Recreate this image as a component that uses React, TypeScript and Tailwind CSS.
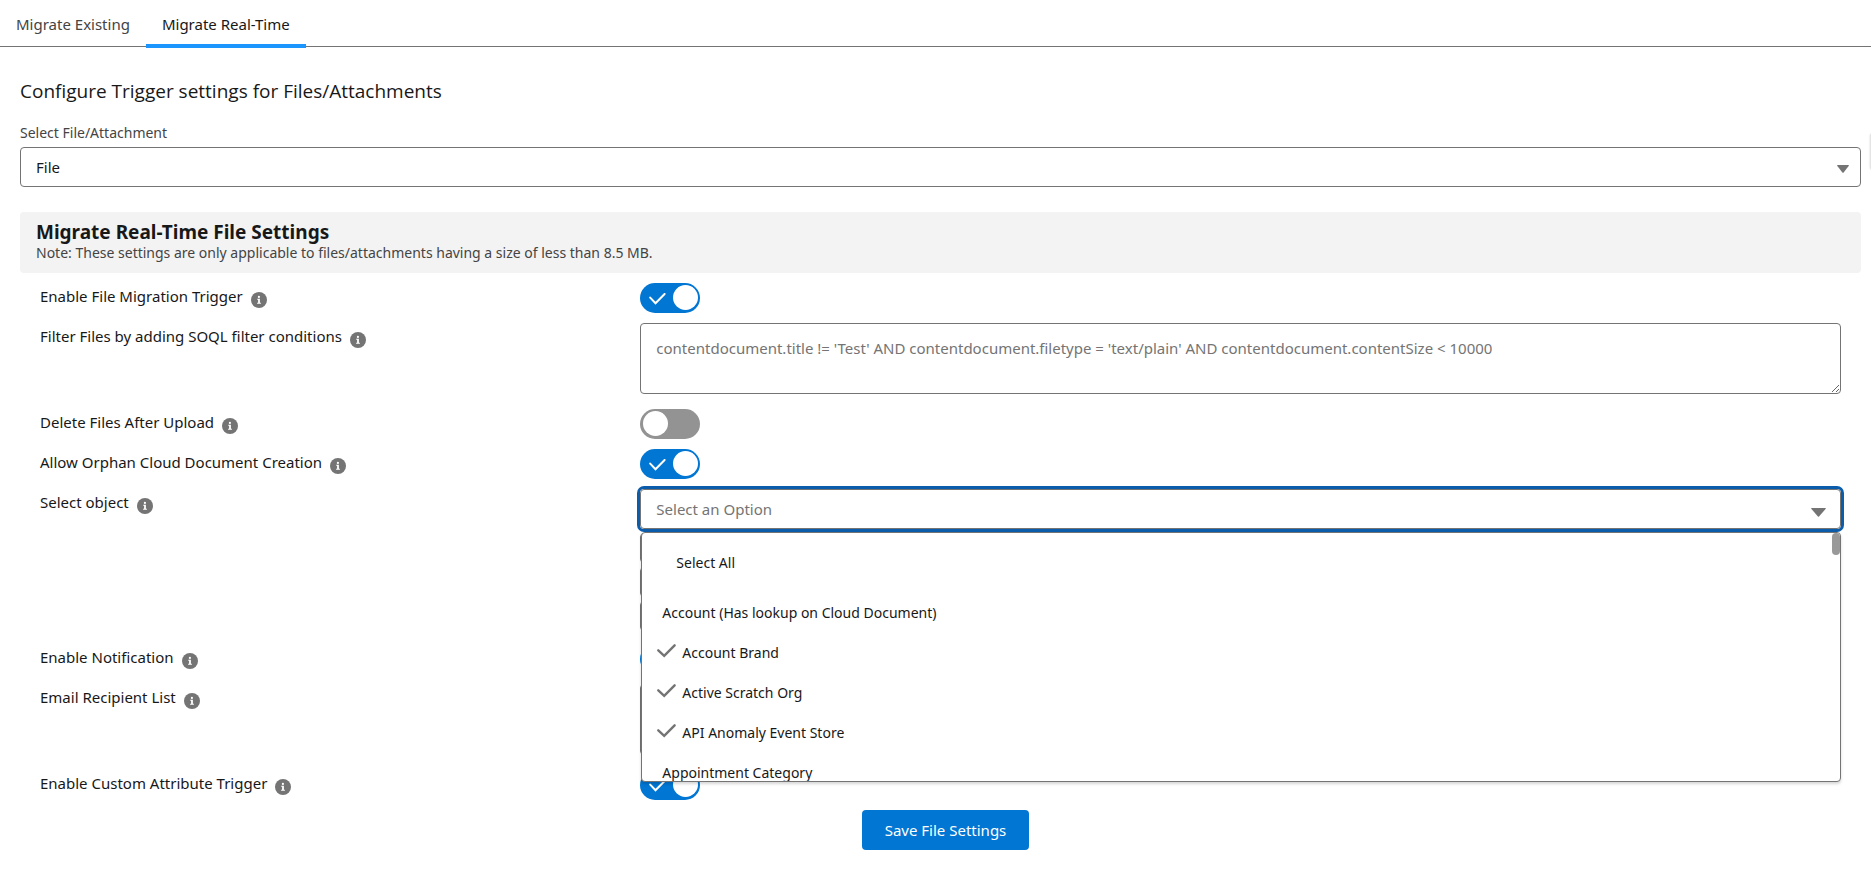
import React, { useState } from 'react';

const OBJECTS = [
    'Account (Has lookup on Cloud Document)',
    'Account Brand',
    'Active Scratch Org',
    'API Anomaly Event Store',
    'Appointment Category',
];

const InfoIcon: React.FC = () => (
    <svg className="w-4 h-4 mt-[6px] shrink-0" viewBox="0 0 16 16" aria-hidden="true">
        <circle cx="8" cy="8" r="8" fill="#747474" />
        <circle cx="7.9" cy="4.9" r="1.1" fill="#fff" />
        <path d="M6.2 6.8h2.7v4h1v1H6.1v-1h1V7.8h-.9z" fill="#fff" />
    </svg>
);

const Caret: React.FC<{ className: string }> = ({ className }) => (
    <svg className={className} viewBox="0 0 14 9" preserveAspectRatio="none" aria-hidden="true">
        <path d="M.6 0h12.8q.8.2.2 1L7.5 8.6q-.5.5-1 0L.4 1Q-.2.2.6 0z" fill="#747474" />
    </svg>
);

interface RowProps {
    label: string;
    htmlFor: string;
    className?: string;
    children: React.ReactNode;
}

const Row: React.FC<RowProps> = ({ label, htmlFor, className = 'pb-[10px]', children }) => (
    <div className={`flex items-start ${className}`}>
        <div className="w-1/3 shrink-0 flex items-start gap-2 pt-[3px]">
            <label htmlFor={htmlFor} className="leading-5">{label}</label>
            <InfoIcon />
        </div>
        <div className="flex-1 min-w-0">{children}</div>
    </div>
);

interface ToggleProps {
    id: string;
    defaultChecked?: boolean;
}

const Toggle: React.FC<ToggleProps> = ({ id, defaultChecked }) => (
    <div className="relative w-[60px] h-[30px]">
        <input
            id={id}
            type="checkbox"
            role="switch"
            defaultChecked={defaultChecked}
            className="peer appearance-none block w-full h-full rounded-full bg-[#939393] checked:bg-[#0176d3] cursor-pointer"
        />
        <span className="absolute top-[2px] left-[3px] w-[25px] h-[25px] rounded-full bg-white pointer-events-none peer-checked:left-[33px]" />
        <svg className="hidden peer-checked:block absolute top-[10px] left-[9px] w-[17px] h-3 pointer-events-none" viewBox="0 0 17 12" fill="none">
            <path d="M1.2 4.6l5.3 5.6L15.6 1" stroke="#fff" strokeWidth="2" strokeLinecap="round" />
        </svg>
    </div>
);

const App: React.FC = () => {
    const [tab, setTab] = useState('real-time');
    const [selected, setSelected] = useState<string[]>(OBJECTS.slice(1, 4));

    const toggleObject = (name: string) => {
        setSelected((prev) => (prev.includes(name) ? prev.filter((n) => n !== name) : [...prev, name]));
    };

    const tabClass = (name: string) =>
        tab === name
            ? 'relative h-full px-4 pt-[2px] text-[#181818] after:absolute after:inset-x-0 after:-bottom-[2px] after:h-1 after:bg-[#1b96ff]'
            : 'relative h-full px-4 pt-[2px] text-[#444444]';

    return (
        <div className="relative min-h-screen overflow-hidden bg-white text-[#181818] text-[15px] font-['Noto_Sans','Open_Sans',sans-serif]">
            <div role="tablist" className="flex h-[47px] border-b border-[#747474]">
                <button role="tab" aria-selected={tab === 'existing'} onClick={() => setTab('existing')} className={tabClass('existing')}>
                    Migrate Existing
                </button>
                <button role="tab" aria-selected={tab === 'real-time'} onClick={() => setTab('real-time')} className={tabClass('real-time')}>
                    Migrate Real-Time
                </button>
            </div>

            <div className="pl-5 pr-[10px] pt-8">
                <h1 className="text-[19px] leading-6 font-['Open_Sans','Noto_Sans',sans-serif]">Configure Trigger settings for Files/Attachments</h1>

                <label htmlFor="file-type" className="block mt-[18px] mb-[2px] text-sm leading-6 text-[#444444]">Select File/Attachment</label>
                <div className="relative">
                    <select id="file-type" className="appearance-none block w-full h-10 px-[15px] border border-[#747474] rounded bg-white outline-none">
                        <option>File</option>
                    </select>
                    <Caret className="absolute right-3 top-[18px] w-3 h-2 pointer-events-none" />
                </div>

                <div className="mt-[25px] h-[61px] px-4 pt-2 rounded bg-[#f3f3f3]">
                    <h2 className="text-[19px] leading-6 font-bold">Migrate Real-Time File Settings</h2>
                    <p className="text-sm leading-[18px] text-[#444444]">
                        Note: These settings are only applicable to files/attachments having a size of less than 8.5 MB.
                    </p>
                </div>

                <form className="px-5 pt-[10px]" onSubmit={(e) => e.preventDefault()}>
                    <Row label="Enable File Migration Trigger" htmlFor="migration">
                        <Toggle id="migration" defaultChecked />
                    </Row>
                    <Row label="Filter Files by adding SOQL filter conditions" htmlFor="soql" className="pb-[15px]">
                        <textarea
                            id="soql"
                            placeholder="contentdocument.title != 'Test' AND contentdocument.filetype = 'text/plain' AND contentdocument.contentSize < 10000"
                            className="block w-full h-[71px] px-[15px] py-3 leading-6 border border-[#747474] rounded placeholder:text-[#747474] outline-none"
                        />
                    </Row>
                    <Row label="Delete Files After Upload" htmlFor="delete">
                        <Toggle id="delete" />
                    </Row>
                    <Row label="Allow Orphan Cloud Document Creation" htmlFor="orphan">
                        <Toggle id="orphan" defaultChecked />
                    </Row>
                    <Row label="Select object" htmlFor="objects" className="pb-[13px]">
                        <div className="relative">
                            <input
                                id="objects"
                                role="combobox"
                                aria-expanded="true"
                                aria-controls="object-list"
                                placeholder="Select an Option"
                                className="block w-full h-10 px-[15px] border border-[#747474] rounded ring-3 ring-[#0b5cab] placeholder:text-[#747474] outline-none"
                            />
                            <Caret className="absolute right-[15px] top-[19px] w-[15px] h-[9px] pointer-events-none" />
                            <div className="absolute z-10 top-[43px] left-px right-0 h-[250px] overflow-hidden border border-[#747474] rounded bg-white shadow-[0_2px_3px_rgba(0,0,0,0.16)] text-sm">
                                <ul id="object-list" role="listbox" aria-multiselectable="true">
                                    <li role="option" aria-selected="false" className="pt-[18px] pb-[18px] pl-[34px] leading-6">Select All</li>
                                    {OBJECTS.map((name) => {
                                        const isSelected = selected.includes(name);
                                        return (
                                            <li
                                                key={name}
                                                role="option"
                                                aria-selected={isSelected}
                                                onClick={() => toggleObject(name)}
                                                className={`flex items-center gap-[6px] h-10 cursor-pointer ${isSelected ? 'pl-[15px]' : 'pl-5'}`}
                                            >
                                                {isSelected && (
                                                    <svg className="w-[19px] h-[14px] -mt-1" viewBox="0 0 19 14" fill="none">
                                                        <path d="M1.3 6.3l5.9 5.5L17.6 1.3" stroke="#747474" strokeWidth="2.4" strokeLinecap="round" />
                                                    </svg>
                                                )}
                                                {name}
                                            </li>
                                        );
                                    })}
                                </ul>
                                <span className="absolute top-0 right-0 w-2 h-[22px] rounded-full bg-[#999999]" />
                            </div>
                        </div>
                        <div className="flex flex-col items-start gap-1 pt-1">
                            {selected.map((name) => (
                                <span key={name} className="h-[30px] w-60 border border-[#747474] rounded" />
                            ))}
                        </div>
                    </Row>
                    <Row label="Enable Notification" htmlFor="notification">
                        <Toggle id="notification" defaultChecked />
                    </Row>
                    <Row label="Email Recipient List" htmlFor="recipients" className="pb-[15px]">
                        <textarea id="recipients" className="block w-full h-[71px] px-[15px] py-3 border border-[#747474] rounded outline-none" />
                    </Row>
                    <Row label="Enable Custom Attribute Trigger" htmlFor="custom">
                        <Toggle id="custom" defaultChecked />
                    </Row>
                </form>
                <div className="flex justify-center pl-[10px]">
                    <button className="h-10 px-[23px] rounded bg-[#0176d3] text-white">Save File Settings</button>
                </div>
            </div>

            {/* edge of the collapsed side handle */}
            <div className="absolute top-[133px] -right-[9px] w-[10px] h-[37px] rounded bg-[#e5e5e5] shadow-[0_0_2px_rgba(0,0,0,0.2)]" />
        </div>
    );
};

export default App;
